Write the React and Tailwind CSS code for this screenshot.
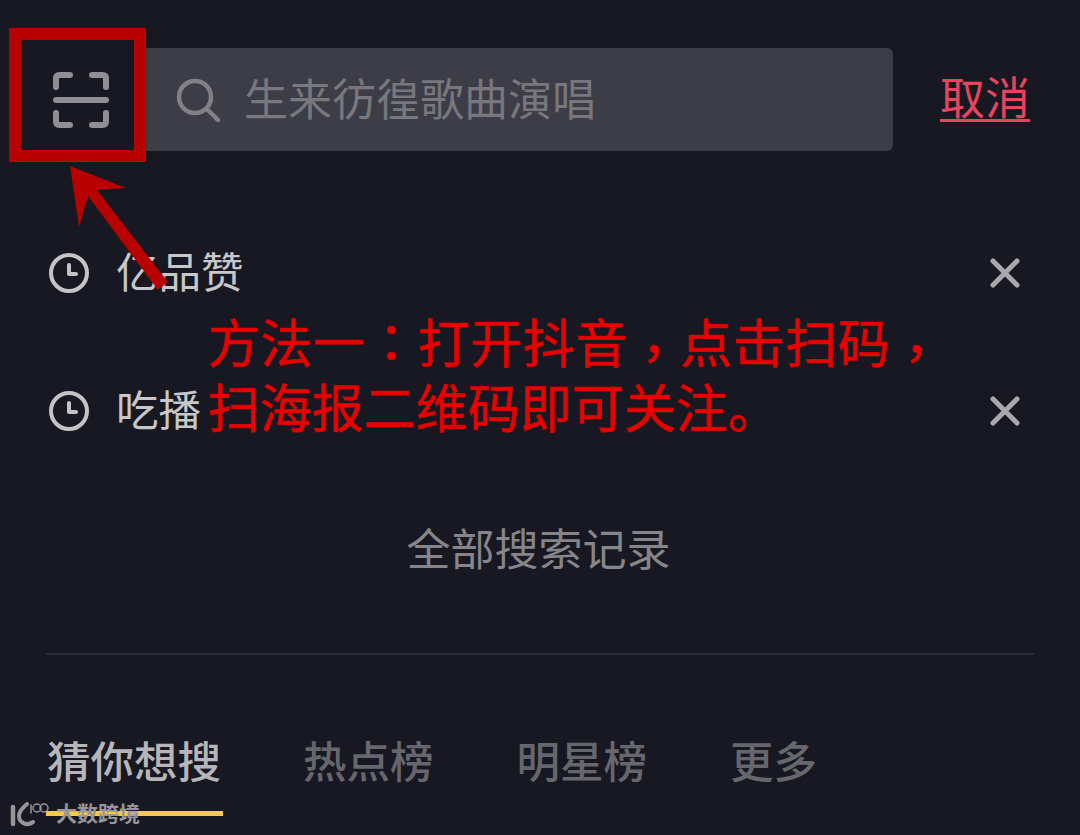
import React from "react";

const cjk = "font-['Roboto','Noto_Sans_CJK_SC',sans-serif]";

const ScanIcon = () => (
  <svg width="56" height="56" viewBox="0 0 56 56" fill="none" stroke="#8e8e94" strokeWidth="6" strokeLinecap="round" strokeLinejoin="round">
    <path d="M17 3H6.500Q3 3 3 6.500V15" />
    <path d="M39 3H49.500Q53 3 53 6.500V15" />
    <path d="M3 28H53" />
    <path d="M3 41V49.500Q3 53 6.500 53H17" />
    <path d="M53 41V49.500Q53 53 49.500 53H39" />
  </svg>
);

const SearchIcon = () => (
  <svg width="44" height="44" viewBox="0 0 44 44" fill="none" stroke="#808086" strokeWidth="4.500" strokeLinecap="round">
    <circle cx="19" cy="19" r="16" />
    <path d="M31 31L42 42" />
  </svg>
);

const ClockIcon = () => (
  <svg width="40" height="40" viewBox="0 0 40 40" fill="none" stroke="#c4c4c6" strokeWidth="4" strokeLinecap="round" strokeLinejoin="round">
    <circle cx="20" cy="20" r="18" />
    <path d="M20 12V21H27" />
  </svg>
);

const CloseIcon = () => (
  <svg width="30" height="30" viewBox="0 0 30 30" fill="none" stroke="#a9a9ad" strokeWidth="5" strokeLinecap="round">
    <path d="M3 3L27 27M27 3L3 27" />
  </svg>
);

const HistoryRow = ({ text }) => (
  <div className="flex h-[138px] items-center pl-[49px] pr-[60px]">
    <ClockIcon />
    <span className="ml-[27px] flex-1 pt-[2px] text-[42.500px] leading-none text-[#c8c8ca]">{text}</span>
    <CloseIcon />
  </div>
);

const Comma = () => <span className="inline-block translate-y-[10px]">，</span>;

export default function App() {
  return (
    <div className={`relative h-[835px] w-[1080px] overflow-hidden bg-[#171821] ${cjk}`}>
      <div className="flex items-start pt-[48px]">
        <div className="flex h-[103px] w-[146px] shrink-0 items-center justify-center pl-[16px] pt-[1px]">
          <ScanIcon />
        </div>
        <div className="flex h-[103px] w-[747px] items-center rounded-r-[6px] bg-[#3c3d46] pl-[30px]">
          <SearchIcon />
          <span className="ml-[24px] pt-[3px] text-[44px] leading-none text-[#77777d]">生来彷徨歌曲演唱</span>
        </div>
        <div className="flex h-[103px] flex-1 items-center pl-[47px]">
          <span className="text-[45px] leading-none text-[#e8445f] underline decoration-[3px] underline-offset-[4px]">取消</span>
        </div>
      </div>

      <div className="pt-[53px]">
        <HistoryRow text="亿品赞" />
        <HistoryRow text="吃播" />
      </div>

      <div className="pt-[49px] pr-[3px] text-center text-[44px] leading-none text-[#85858a]">全部搜索记录</div>

      <div className="mx-[46px] mt-[80px] h-[2px] bg-[#2b2c35]" />

      <div className="flex items-center pl-[47px] pt-[87px] text-[43.500px] font-medium leading-none text-[#66676c]">
        <span className="text-[#b6b6ba]">猜你想搜</span>
        <span className="ml-[82px]">热点榜</span>
        <span className="ml-[83px]">明星榜</span>
        <span className="ml-[83px]">更多</span>
      </div>
      <div className="ml-[46px] mt-[25px] h-[5px] w-[177px] bg-[#f5cb45]" />

      {/* annotations on top of the screenshot */}
      <div className="absolute left-[9px] top-[28px] h-[134px] w-[137px] border-[12px] border-[#b90000]" />
      <svg className="absolute left-0 top-0" width="200" height="320" viewBox="0 0 200 320">
        <polygon points="70,166 126,188 97,190 168,282 158,290 88,196 79,227" fill="#b90000" />
      </svg>
      <div className="absolute left-[208px] top-[310px] whitespace-nowrap text-[52px] leading-[67px] text-[#e80000] [-webkit-text-stroke:0.7px_#e80000]">
        <div className="-mt-[3px] pb-[3px] font-['Noto_Sans_CJK_TC',sans-serif] tracking-[0.5px]">
          方法一：打开抖音<Comma />点击扫码<Comma />
        </div>
        <div>扫海报二维码即可关注。</div>
      </div>

      <div className="absolute left-[10px] top-[802px] flex items-start text-[#96969a]">
        <svg width="40" height="26" viewBox="0 0 40 26" fill="none" stroke="currentColor" strokeLinecap="round">
          <path d="M3 5V22" strokeWidth="4.500" />
          <path d="M17 2C11 7 9 11 9 14C9 20 16 25 23 20" strokeWidth="4" />
          <path d="M21 3V11" strokeWidth="1.500" />
          <circle cx="27" cy="6" r="4" strokeWidth="1.500" />
          <circle cx="34" cy="6" r="4" strokeWidth="1.500" />
        </svg>
        <span className="ml-[6px] mt-[2px] text-[21px] font-bold leading-none">大数跨境</span>
      </div>
    </div>
  );
}
